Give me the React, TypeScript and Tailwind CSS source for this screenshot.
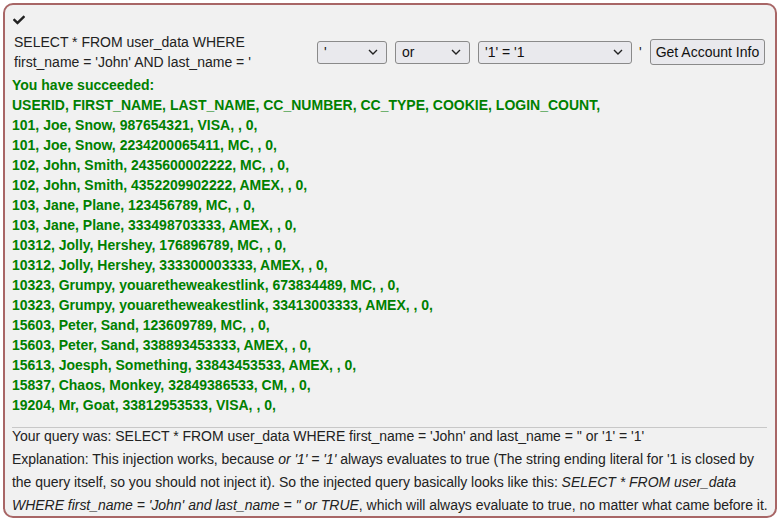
import { FaCheck } from 'react-icons/fa';

const rows = [
  'USERID, FIRST_NAME, LAST_NAME, CC_NUMBER, CC_TYPE, COOKIE, LOGIN_COUNT,',
  '101, Joe, Snow, 987654321, VISA, , 0,',
  '101, Joe, Snow, 2234200065411, MC, , 0,',
  '102, John, Smith, 2435600002222, MC, , 0,',
  '102, John, Smith, 4352209902222, AMEX, , 0,',
  '103, Jane, Plane, 123456789, MC, , 0,',
  '103, Jane, Plane, 333498703333, AMEX, , 0,',
  '10312, Jolly, Hershey, 176896789, MC, , 0,',
  '10312, Jolly, Hershey, 333300003333, AMEX, , 0,',
  '10323, Grumpy, youaretheweakestlink, 673834489, MC, , 0,',
  '10323, Grumpy, youaretheweakestlink, 33413003333, AMEX, , 0,',
  '15603, Peter, Sand, 123609789, MC, , 0,',
  '15603, Peter, Sand, 338893453333, AMEX, , 0,',
  '15613, Joesph, Something, 33843453533, AMEX, , 0,',
  '15837, Chaos, Monkey, 32849386533, CM, , 0,',
  '19204, Mr, Goat, 33812953533, VISA, , 0,',
];

function Select({ value, width }: { value: string; width: string }) {
  return (
    <div className={`${width} h-[23px] flex items-center justify-between px-[6px] border border-[#8a8a8a] rounded-[3px] bg-[#e9e9ed] text-[14px] text-[#111]`}>
      <span>{value}</span>
      <svg width="10" height="6" viewBox="0 0 10 6" className="mr-[2px]">
        <path d="M1 1l4 4 4-4" fill="none" stroke="#222" strokeWidth="1.4" />
      </svg>
    </div>
  );
}

export default function App() {
  return (
    <div className="w-[780px] h-[520px] bg-white p-[3px] font-['Liberation_Sans',Arial,sans-serif]">
      <div className="h-[515px] border-2 border-[#a86666] rounded-[10px] bg-[#f1f1f1] pl-[7px] pr-[2px] pt-[9px]">
        <FaCheck className="ml-[1px] text-[12px] text-[#222]" />
        <div className="flex items-center mt-[6px]">
          <div className="w-[305px] shrink-0 pl-[2px] pr-[52px] text-[14px] leading-[20px] text-[#222]">
            SELECT * FROM user_data WHERE first_name = 'John' AND last_name = '
          </div>
          <div className="flex items-center gap-[8px]">
            <Select value="'" width="w-[70px]" />
            <Select value="or" width="w-[75px]" />
            <Select value="'1' = '1" width="w-[154px]" />
            <span className="text-[14px] text-[#222] -ml-[1px]">'</span>
            <button className="h-[26px] px-[5px] border border-[#8a8a8a] rounded-[3px] bg-[#e9e9ed] text-[14px] text-[#111]">
              Get Account Info
            </button>
          </div>
        </div>
        <div className="mt-[3px] text-[14px] leading-[20px] font-bold text-[#008000]">
          <div>You have succeeded:</div>
          {rows.map((r, i) => (
            <div key={i}>{r}</div>
          ))}
        </div>
        <div className="mt-[12px] mr-[6px] border-t border-[#c8c8c8]" />
        <div className="-mt-[3px] text-[14px] leading-[23px] tracking-[-0.03px] text-[#222]">
          <div>Your query was: SELECT * FROM user_data WHERE first_name = 'John' and last_name = '' or '1' = '1'</div>
          <div>
            Explanation: This injection works, because <i>or '1' = '1'</i> always evaluates to true (The string ending literal for '1 is closed by the query itself, so you should not inject it). So the injected query basically looks like this: <i>SELECT * FROM user_data WHERE first_name = 'John' and last_name = '' or TRUE</i>, which will always evaluate to true, no matter what came before it.
          </div>
        </div>
      </div>
    </div>
  );
}
